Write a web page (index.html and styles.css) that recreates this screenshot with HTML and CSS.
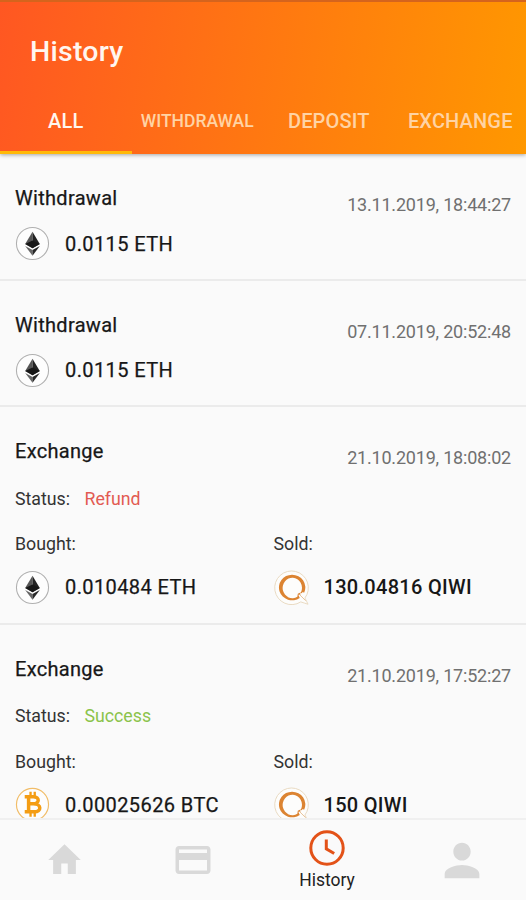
FILE: index.html
```html
<!DOCTYPE html>
<html lang="en">
<head>
<meta charset="utf-8">
<title>History</title>
<link rel="stylesheet" href="styles.css">
</head>
<body>
<svg class="defs" width="0" height="0" aria-hidden="true">
  <symbol id="eth" viewBox="0 0 36 36">
    <circle cx="18" cy="18" r="16.500" fill="#fdfdfd" stroke="#b0b0b0" stroke-width="1.1"/>
    <path d="M18 6 10.500 18.500 18 22.800Z" fill="#555"/>
    <path d="M18 6 25.500 18.500 18 22.800Z" fill="#222"/>
    <path d="M18 15 10.500 18.500 18 22.800 25.500 18.500Z" fill="#171717"/>
    <path d="M10.500 20.500 18 24.700V30.500Z" fill="#666"/>
    <path d="M25.500 20.500 18 24.700V30.500Z" fill="#282828"/>
  </symbol>
  <symbol id="btc" viewBox="0 0 36 36">
    <circle cx="18" cy="18" r="16.500" fill="#fdfdfd" stroke="#f1bd68" stroke-width="1.2"/>
    <g fill="none" stroke="#f49d14">
      <path d="M14 10V25.500M10 10H19C25.500 10 25.500 17.300 19 17.300H14M10 25.500H20C27.500 25.500 27.500 17.300 19 17.300" stroke-width="3.6"/>
      <path d="M16 5V10M20.300 5V10M16 25.500V30.500M20.300 25.500V30.500" stroke-width="2.4"/>
    </g>
  </symbol>
  <symbol id="qiwi" viewBox="0 0 36 36">
    <path d="M31.800 28.800A17.300 17.300 0 1 0 27.500 32.800Q31 34 35 35.200 33.500 32 31.800 28.800Z" fill="#fdfdfc" stroke="#e8d9c0" stroke-width="1"/>
    <path fill-rule="evenodd" fill="#dc8432" d="M18.500 4.800A13.600 13.200 0 0 1 31 23.500L29.500 22.500 28.500 24 27 23.500 27.200 25.500 25 25.500 26.500 28.800A13.600 13.200 0 1 1 18.500 4.800ZM19.500 8A10 10.500 0 1 0 24 27.500L24.500 24.500 27.800 23A10 10.500 0 0 0 19.500 8Z"/>
    <path d="M26 25 32.500 31.500" stroke="#e2b27e" stroke-width=".8"/>
  </symbol>
</svg>
<div class="screen">
  <header class="header">
    <h1 class="title">History</h1>
    <nav class="tabs">
      <a class="tab active"><span class="all">ALL</span></a>
      <a class="tab"><span class="small">WITHDRAWAL</span></a>
      <a class="tab"><span>DEPOSIT</span></a>
      <a class="tab"><span>EXCHANGE</span></a>
    </nav>
  </header>
  <main class="list">
    <article class="row">
      <div class="top"><h2>Withdrawal</h2><time>13.11.2019, 18:44:27</time></div>
      <div class="amount"><svg class="coin"><use href="#eth"/></svg><span>0.0115 ETH</span></div>
    </article>
    <article class="row">
      <div class="top"><h2>Withdrawal</h2><time>07.11.2019, 20:52:48</time></div>
      <div class="amount"><svg class="coin"><use href="#eth"/></svg><span>0.0115 ETH</span></div>
    </article>
    <article class="row exchange">
      <div class="top"><h2>Exchange</h2><time>21.10.2019, 18:08:02</time></div>
      <p class="status">Status: <span class="refund">Refund</span></p>
      <div class="sides">
        <div><p class="label">Bought:</p><div class="amount"><svg class="coin"><use href="#eth"/></svg><span>0.010484 ETH</span></div></div>
        <div><p class="label">Sold:</p><div class="amount"><svg class="coin"><use href="#qiwi"/></svg><span class="strong">130.04816 QIWI</span></div></div>
      </div>
    </article>
    <article class="row exchange">
      <div class="top"><h2>Exchange</h2><time>21.10.2019, 17:52:27</time></div>
      <p class="status">Status: <span class="success">Success</span></p>
      <div class="sides">
        <div><p class="label">Bought:</p><div class="amount"><svg class="coin"><use href="#btc"/></svg><span>0.00025626 BTC</span></div></div>
        <div><p class="label">Sold:</p><div class="amount"><svg class="coin"><use href="#qiwi"/></svg><span class="strong">150 QIWI</span></div></div>
      </div>
    </article>
  </main>
  <nav class="bottom">
    <a class="item"><svg width="39" height="42" viewBox="0 0 24 24" preserveAspectRatio="none"><path d="M10 20v-6h4v6h5v-8h3L12 3 2 12h3v8z"/></svg></a>
    <a class="item"><svg width="42" height="42" viewBox="0 0 24 24"><path d="M20 4H4c-1.110 0-2 .89-2 2v12c0 1.110.89 2 2 2h16c1.110 0 2-.89 2-2V6c0-1.110-.89-2-2-2zm0 14H4v-6h16v6zm0-10H4V6h16v2z"/></svg></a>
    <a class="item current"><svg width="36" height="36" viewBox="0 0 36 36"><circle cx="18" cy="18" r="16.200"/><path d="M17.300 9.500V18.800L25.200 23.500"/></svg><span>History</span></a>
    <a class="item"><svg width="52" height="53" viewBox="0 0 24 24" preserveAspectRatio="none"><path d="M12 12c2.210 0 4-1.790 4-4s-1.790-4-4-4-4 1.790-4 4 1.790 4 4 4zm0 2c-2.670 0-8 1.340-8 4v2h16v-2c0-2.660-5.330-4-8-4z"/></svg></a>
  </nav>
</div>
</body>
</html>
```
FILE: styles.css
```css
* { box-sizing: border-box; margin: 0; }
body { font-family: Roboto, "Liberation Sans", sans-serif; color: #171717; background: #fafafa; }
.defs { display: block; }
.screen { height: 900px; display: flex; flex-direction: column; overflow: hidden; }
.header {
  height: 154px; flex: none; z-index: 1;
  display: flex; flex-direction: column; justify-content: space-between;
  border-top: 2px solid #d5641d;
  background: linear-gradient(98deg, #ff5722, #ff9800) border-box;
  box-shadow: 0 1px 4px rgba(0, 0, 0, .35);
}
.title { padding: 33px 0 0 30px; font-size: 28.500px; line-height: 34px; font-weight: 500; letter-spacing: .25px; color: #fff6ef; }
.tabs { display: grid; grid-template-columns: repeat(4, 1fr); height: 66px; }
.tab { display: flex; justify-content: center; align-items: center; padding-top: 2px; font-size: 20px; font-weight: 500; letter-spacing: .15px; color: #ffd3a4; border-bottom: 3px solid transparent; white-space: nowrap; }
.tab.active { color: #fff6ef; border-color: #ffb908; }
.small { font-size: 17.500px; letter-spacing: 0; }
.list { flex: 1; min-height: 0; overflow: hidden; }
.row { height: 126.500px; padding: 32px 15px 0; border-bottom: 2px solid #ebebeb; }
.row.exchange { height: 217.750px; }
.top { display: flex; justify-content: space-between; line-height: 24px; }
h2 { font-size: 20px; font-weight: 400; letter-spacing: .3px; -webkit-text-stroke: .25px; }
time { font-size: 18px; letter-spacing: -.2px; color: #707070; padding-top: 7px; }
.amount { display: flex; align-items: center; gap: 15px; height: 36px; font-size: 20px; letter-spacing: .4px; -webkit-text-stroke: .25px; }
.row > .amount { margin-top: 8.500px; }
.coin { width: 35px; height: 35px; }
.strong { font-weight: 500; letter-spacing: .3px; -webkit-text-stroke: 0; }
.status, .label { font-size: 17.750px; line-height: 22px; color: #333; }
.status { margin-top: 17.500px; }
.status span { margin-left: 10px; }
.refund { color: #e25b52; }
.success { color: #8bc34a; }
.sides { display: grid; grid-template-columns: 258.500px 1fr; margin-top: 23.500px; }
.sides .amount { margin-top: 14px; }
.bottom { height: 82px; flex: none; display: grid; grid-template-columns: 129px 128px 140px 129px; border-top: 2px solid #f0f0f0; background: #fafafa; }
.item { display: flex; flex-direction: column; align-items: center; justify-content: center; }
.item svg { fill: #d9d9d9; }
.item.current { padding-top: 2px; }
.item.current svg { fill: none; stroke: #e35218; stroke-width: 3; }
.item.current span { font-size: 17.500px; line-height: 24px; color: #222; margin-top: 2px; }
```
